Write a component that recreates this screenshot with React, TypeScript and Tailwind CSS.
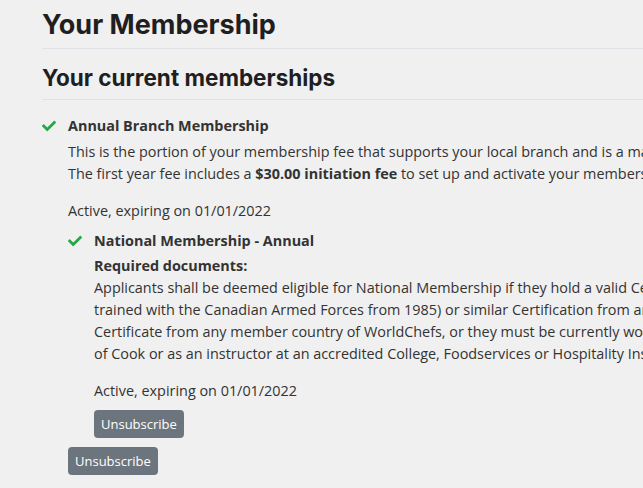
import React from 'react';
import { FaCheck } from 'react-icons/fa';

const body = { fontFamily: '"Open Sans", "Noto Sans", sans-serif' };
const head = { fontFamily: 'Inter, "Noto Sans", sans-serif' };

const CheckIcon: React.FC = () => (
  <FaCheck className="text-[#28a745] w-[14px] h-[14px] shrink-0 mt-[4px]" />
);

const UnsubscribeButton: React.FC = () => (
  <button className="bg-[#6c757d] text-white text-[13px] leading-[20px] px-[7px] py-1 rounded-[4px]">
    Unsubscribe
  </button>
);

const App: React.FC = () => {
  return (
    <div className="min-h-screen bg-[#f0f0f0] text-[#333333] overflow-hidden" style={body}>
      <main className="w-[1200px] pl-[42px] pt-[7px]">
        <h1 className="text-[27px] font-bold text-[#1f1f1f] leading-[36px] pb-[5px] border-b border-[#dfe1e6]" style={head}>
          Your Membership
        </h1>
        <h2 className="mt-[13px] text-[22.5px] font-bold text-[#1f1f1f] leading-[32px] pb-[5px] border-b border-[#dfe1e6]" style={head}>
          Your current memberships
        </h2>

        <div className="mt-[15px] flex gap-[12px]">
          <CheckIcon />
          <div className="text-[14.4px] leading-[22px]">
            <div className="font-bold">Annual Branch Membership</div>
            <p className="mt-[4px] whitespace-nowrap">
              This is the portion of your membership fee that supports your local branch and is a mandatory part of your membership.
              <br />
              The first year fee includes a <strong>$30.00 initiation fee</strong> to set up and activate your membership.
            </p>
            <p className="mt-[15px]">Active, expiring on 01/01/2022</p>

            <div className="mt-[8px] flex gap-[12px]">
              <CheckIcon />
              <div>
                <div className="font-bold">National Membership - Annual</div>
                <div className="mt-[3px] font-bold">Required documents:</div>
                <p className="whitespace-nowrap">
                  Applicants shall be deemed eligible for National Membership if they hold a valid Certificate of Qualification (Red Seal) as a Cook (or have been
                  <br />
                  trained with the Canadian Armed Forces from 1985) or similar Certification from any province or territory of Canada, or a Cook
                  <br />
                  Certificate from any member country of WorldChefs, or they must be currently working in the position
                  <br />
                  of Cook or as an instructor at an accredited College, Foodservices or Hospitality Institution.
                </p>
                <p className="mt-[15px]">Active, expiring on 01/01/2022</p>
                <div className="mt-[8px]">
                  <UnsubscribeButton />
                </div>
              </div>
            </div>
            <div className="mt-[9px]">
              <UnsubscribeButton />
            </div>
          </div>
        </div>
      </main>
    </div>
  );
};

export default App;
